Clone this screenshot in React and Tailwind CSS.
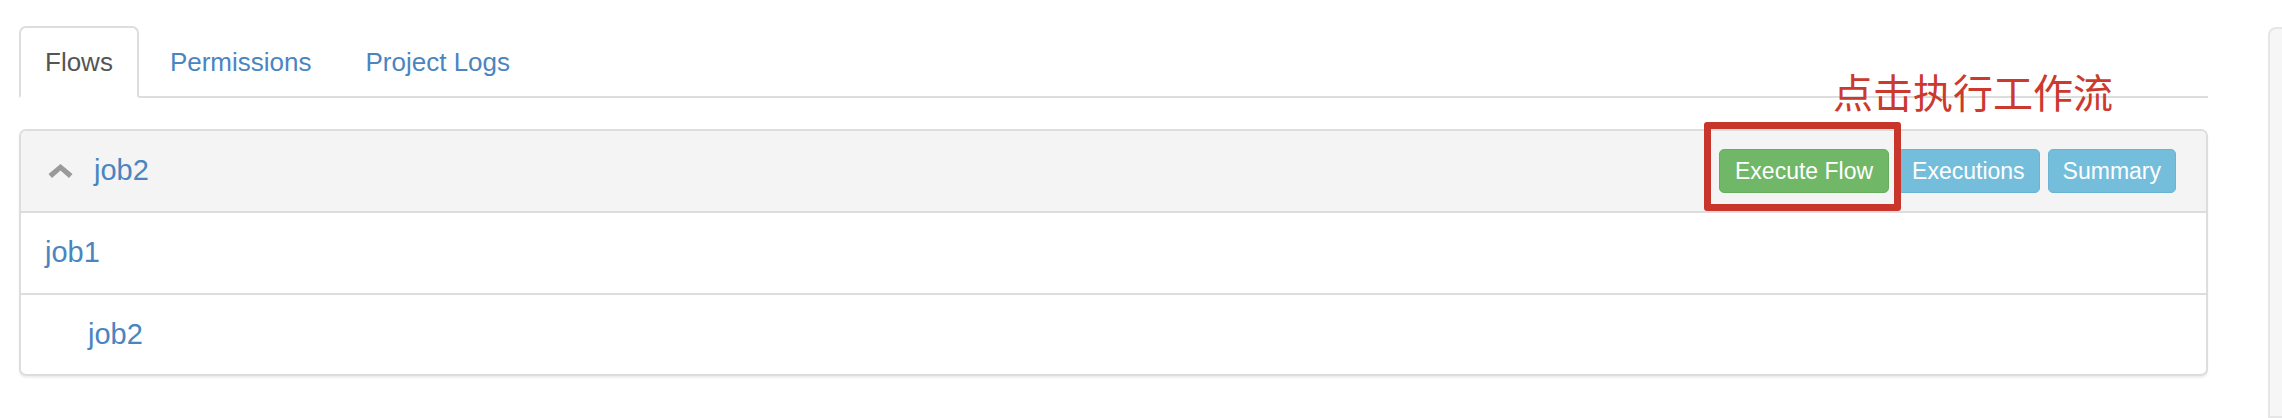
import React from 'react';

function ChevronUp() {
  return (
    <svg width="25" height="14" viewBox="0 0 24 14" className="shrink-0">
      <path d="M12 0 L24 10 L20.5 14 L12 6.5 L3.5 14 L0 10 Z" fill="#9a9a9a" />
    </svg>
  );
}

function Tabs() {
  return (
    <ul className="flex border-b-2 border-[#dddddd] text-[26px] leading-none">
      <li className="-mb-[2px] mr-[5px]">
        <span className="block px-[24px] py-[21px] bg-white text-[#555555] border-2 border-[#dddddd] border-b-transparent rounded-t-[7px]">
          Flows
        </span>
      </li>
      <li className="-mb-[2px] mr-[2px]">
        <a className="block px-[24px] py-[21px] text-[#4a85c0] border-2 border-transparent">Permissions</a>
      </li>
      <li className="-mb-[2px]">
        <a className="block px-[24px] py-[21px] text-[#4a85c0] border-2 border-transparent">Project Logs</a>
      </li>
    </ul>
  );
}

function FlowPanel() {
  return (
    <div className="mt-[31px] border-2 border-[#dddddd] rounded-[7px] bg-white shadow-[0_2px_2px_rgba(0,0,0,0.07)] overflow-hidden">
      <div className="h-[82px] bg-[#f4f4f4] border-b-2 border-[#dddddd] flex items-center pl-[27px] pr-[30px]">
        <ChevronUp />
        <a className="ml-[21px] text-[29px] text-[#4a85c0]">job2</a>
        <div className="ml-auto flex items-center gap-[8px] text-[23px] leading-none text-white">
          <button className="h-[44px] px-[15px] rounded-[5px] bg-[#70b767] border border-[#66ad5e]">Execute Flow</button>
          <button className="h-[44px] px-[14px] rounded-[5px] bg-[#74bedc] border border-[#6ab4d3]">Executions</button>
          <button className="h-[44px] px-[14px] rounded-[5px] bg-[#74bedc] border border-[#6ab4d3]">Summary</button>
        </div>
      </div>
      <div className="h-[82px] border-b-2 border-[#dddddd] flex items-center pl-[24px] text-[29px] text-[#4a85c0]">
        job1
      </div>
      <div className="h-[79px] flex items-center pl-[67px] text-[29px] text-[#4a85c0]">
        job2
      </div>
    </div>
  );
}

export default function App() {
  return (
    <div className="relative w-[2282px] h-[418px] overflow-hidden bg-white flex font-['Liberation_Sans',Arial,sans-serif]">
      <div className="w-[2189px] ml-[19px] pt-[26px] shrink-0">
        <Tabs />
        <FlowPanel />
      </div>
      <div className="ml-[60px] mt-[27px] w-[300px] shrink-0 bg-[#f6f6f6] border-2 border-[#e6e6e6] rounded-tl-[8px]" />

      {/* annotation overlay */}
      <div className="absolute left-[1704px] top-[122px] w-[197px] h-[89px] border-[7px] border-[#c8352a] rounded-[3px]" />
      <div className="absolute left-[1833px] top-[71px] text-[40px] leading-none text-[#cc392d] font-['Noto_Sans_CJK_SC',sans-serif]">
        点击执行工作流
      </div>
    </div>
  );
}
